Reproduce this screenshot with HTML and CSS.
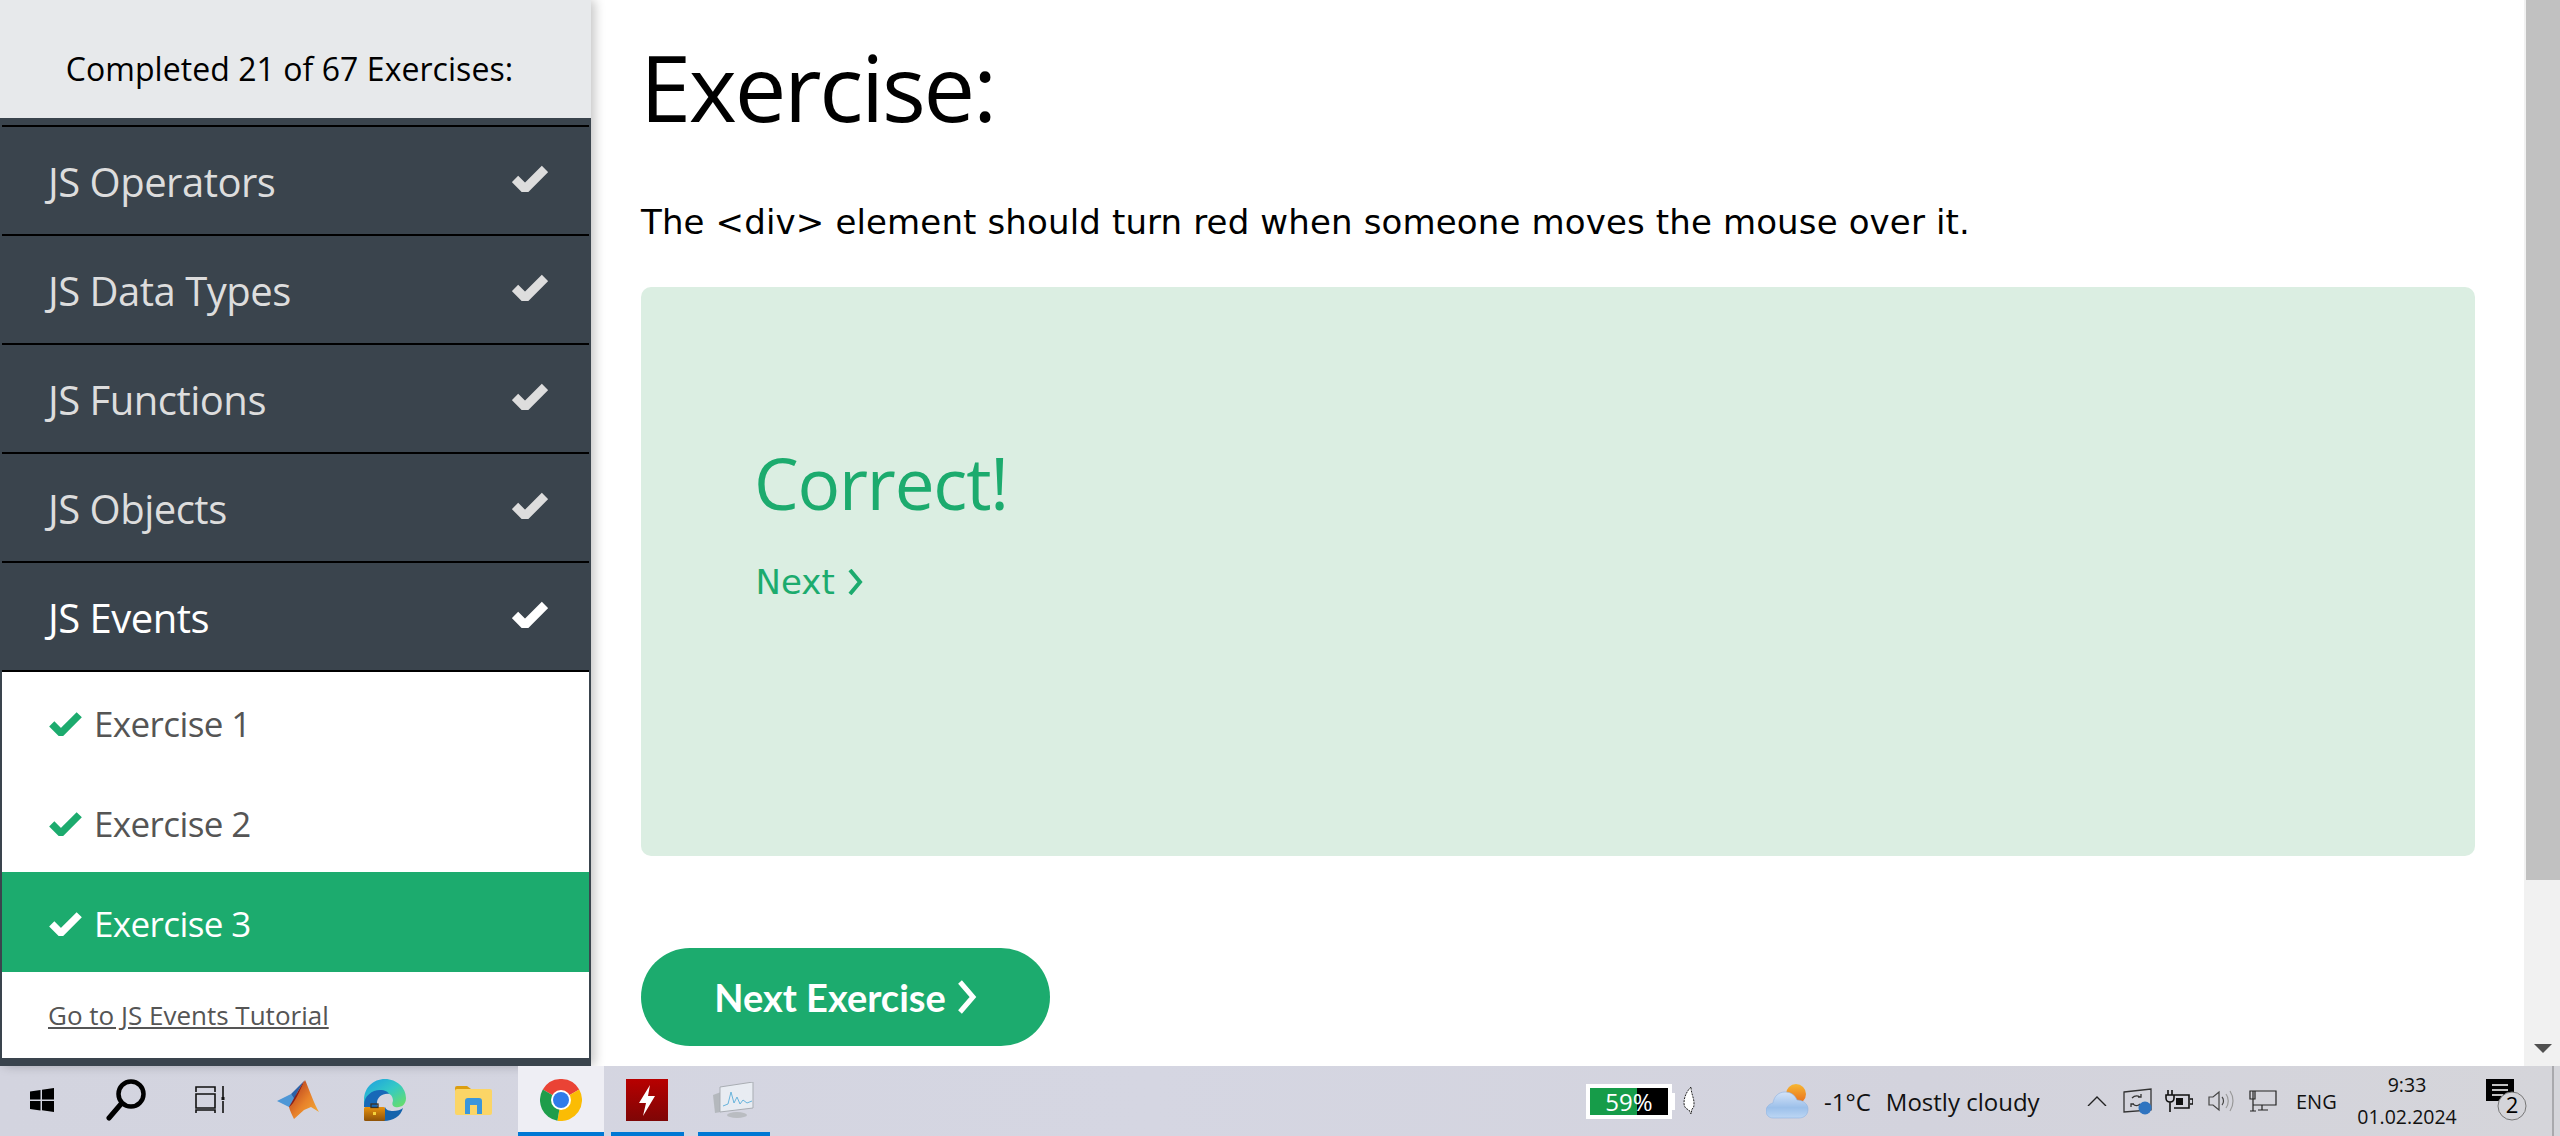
FILE: index.html
```html
<!DOCTYPE html>
<html lang="en">
  <head>
    <meta charset="UTF-8" />
    <title>JS Events Exercise</title>
    <link rel="stylesheet" href="styles.css">
  </head>
  <body>
    <div class="window">
      <aside class="sidebar">
        <div class="progress">Completed 21 of 67 Exercises:</div>
        <div class="menu">
          <div class="chapter"><span>JS Operators</span><svg class="tick" viewBox="0 0 36 28"><path d="M3 15l10 10L33 5"/></svg></div>
          <div class="chapter"><span>JS Data Types</span><svg class="tick" viewBox="0 0 36 28"><path d="M3 15l10 10L33 5"/></svg></div>
          <div class="chapter"><span>JS Functions</span><svg class="tick" viewBox="0 0 36 28"><path d="M3 15l10 10L33 5"/></svg></div>
          <div class="chapter"><span>JS Objects</span><svg class="tick" viewBox="0 0 36 28"><path d="M3 15l10 10L33 5"/></svg></div>
          <div class="chapter open"><span>JS Events</span><svg class="tick" viewBox="0 0 36 28"><path d="M3 15l10 10L33 5"/></svg></div>
          <div class="exercises">
            <div class="exercise"><svg class="mini-tick" viewBox="0 0 36 28"><path d="M3 15l10 10L33 5"/></svg>Exercise 1</div>
            <div class="exercise"><svg class="mini-tick" viewBox="0 0 36 28"><path d="M3 15l10 10L33 5"/></svg>Exercise 2</div>
            <div class="exercise current"><svg class="mini-tick" viewBox="0 0 36 28"><path d="M3 15l10 10L33 5"/></svg>Exercise 3</div>
            <div class="tutorial"><a href="#">Go to JS Events Tutorial</a></div>
          </div>
        </div>
      </aside>

      <main class="content">
        <h1>Exercise:</h1>
        <p class="question">The &lt;div&gt; element should turn red when someone moves the mouse over it.</p>
        <div class="result">
          <h2>Correct!</h2>
          <a class="next-link" href="#">Next<svg viewBox="0 0 16 26"><path d="M3 1l10 12L3 25"/></svg></a>
        </div>
        <a class="next-btn" href="#">Next Exercise<svg viewBox="0 0 20 34"><path d="M3 2l13 15L3 32"/></svg></a>
      </main>

      <div class="scrollbar">
        <div class="thumb"></div>
        <div class="arrow"></div>
      </div>
    </div>

    <footer class="taskbar">
      <div class="apps">
        <div class="slot small">
          <svg width="24" height="24" viewBox="0 0 24 24"><path d="M0 3.5l10.5-1.6v9.6H0zM12 1.7L24 0v11.5H12zM0 13h10.5v9.4L0 21zM12 13h12v11l-12-1.7z"/></svg>
        </div>
        <div class="slot small">
          <svg width="42" height="42" viewBox="0 0 42 42" fill="none" stroke="#000"><circle cx="26" cy="15" r="12.5" stroke-width="4.5"/><path d="M16 25L4 39" stroke-width="5" stroke-linecap="round"/></svg>
        </div>
        <div class="slot small">
          <svg width="30" height="28" viewBox="0 0 30 28" fill="none" stroke="#111" stroke-width="1.6"><path d="M1 6V1h19v5M1 8h19v14H1zM1 27v-3h19v3M28 0v11M28 15v12"/><rect x="26.5" y="11" width="3" height="3" fill="#111" stroke="none"/></svg>
        </div>
        <div class="slot shift">
          <svg width="42" height="40" viewBox="0 0 42 40">
            <defs><linearGradient id="peak" x1="0" y1="0" x2="1" y2="1"><stop offset="0" stop-color="#a82a1c"/><stop offset=".55" stop-color="#e8822a"/><stop offset="1" stop-color="#f2b23a"/></linearGradient></defs>
            <path fill="#4e97d6" d="M0 21l14-7 5 7-7 6z"/>
            <path fill="#2c62a8" d="M14 14L27 1l-7 12-2 7z"/>
            <path fill="#8a1f17" d="M12 27L24 6l3-5-5 26z"/>
            <path fill="url(#peak)" d="M28 0c3 6 9 24 14 32l-8-5-7 3-10 9c-2-4-4-8-5-12 6-3 12-20 16-27z"/>
          </svg>
        </div>
        <div class="slot">
          <svg width="42" height="42" viewBox="0 0 42 42">
            <defs>
              <linearGradient id="edgeA" x1="0" y1="0" x2="1" y2="1"><stop offset="0" stop-color="#1b9de2"/><stop offset=".5" stop-color="#33c9c6"/><stop offset="1" stop-color="#6fe05f"/></linearGradient>
              <linearGradient id="bag" x1="0" y1="0" x2="0" y2="1"><stop offset="0" stop-color="#e8920e"/><stop offset="1" stop-color="#8e5208"/></linearGradient>
            </defs>
            <path fill="url(#edgeA)" d="M0 21C0 9 9 0 21 0c12 0 21 9 21 19 0 7-5 10-11 9-3-1-3-4-2-6 0-6-4-8-8-8C11 14 4 18 0 26z"/>
            <path fill="#1769b8" d="M0 26c0-9 8-15 16-15 5 0 8 2 9 4-6-1-12 3-12 9 0 2 0 3 1 4H0z"/>
            <path fill="#1463ac" d="M20 42c-2 0-4-.5-5-1l6-13c1 3 4 4 8 4 4 0 8-1 10-3-2 8-10 13-19 13z"/>
            <rect y="28" width="21" height="14" rx="1.5" fill="url(#bag)"/>
            <rect x="7" y="25" width="7" height="3.5" fill="none" stroke="#3a3226" stroke-width="1.3"/>
            <rect x="9" y="33" width="3" height="3" fill="#f4d23c"/>
          </svg>
        </div>
        <div class="slot shift">
          <svg width="38" height="30" viewBox="0 0 38 30">
            <path fill="#dc9e10" d="M0 3a2 2 0 012-2h10l4 3v4H0z"/>
            <rect y="4" width="37" height="26" rx="2" fill="#fbd566"/>
            <path fill="#3a96dc" d="M10 29V16a3 3 0 013-3h11a3 3 0 013 3v13h-5v-9h-7v9z"/>
          </svg>
        </div>
        <div class="slot active running">
          <svg width="42" height="42" viewBox="0 0 42 42">
            <path fill="#ea4335" d="M21 21L2.8 10.5A21 21 0 0139.2 10.5z"/>
            <path fill="#fbbc04" d="M21 21L39.2 10.5A21 21 0 0117.4 41.7z"/>
            <path fill="#1e9d4b" d="M21 21L17.4 41.7A21 21 0 012.8 10.5z"/>
            <circle cx="21" cy="21" r="10" fill="#fff"/>
            <circle cx="21" cy="21" r="8" fill="#2f7bea"/>
          </svg>
        </div>
        <div class="slot running">
          <svg width="42" height="42" viewBox="0 0 42 42">
            <defs><linearGradient id="red" x1="0" y1="0" x2="0" y2="1"><stop offset="0" stop-color="#b80000"/><stop offset="1" stop-color="#7e0606"/></linearGradient></defs>
            <rect width="42" height="42" fill="url(#red)"/>
            <path fill="#fff" d="M24 6l-11 18h7l-3 13 12-20h-7z"/>
          </svg>
        </div>
        <div class="slot running">
          <svg width="42" height="36" viewBox="0 0 42 36">
            <path fill="#b4b8bd" d="M0 13l8-3v20l-6 1z"/>
            <path fill="#e8ecf2" stroke="#a9adb3" d="M7 5l33-5v26L7 30z"/>
            <path fill="none" stroke="#69b4dc" d="M10 24l5-2 3-12 3 11 3-6 3 7 3-4 4 3 5-2"/>
            <ellipse cx="24" cy="33" rx="10" ry="3" fill="#b9bcc1"/>
          </svg>
        </div>
      </div>

      <div class="tray">
        <div class="battery"><span>59%</span></div>
        <svg class="leaf" width="12" height="30" viewBox="0 0 12 30"><path fill="#fff" stroke="#222" stroke-dasharray="2 1" d="M8 1C3 6 1 12 1 17c0 4 2 6 5 7l2 4 1-5c2-1 2-3 2-6 0-5-3-10-3-16z"/></svg>
        <svg class="weather" width="43" height="35" viewBox="0 0 43 35">
          <defs>
            <linearGradient id="sun" x1="0" y1="0" x2="0" y2="1"><stop offset="0" stop-color="#f7b731"/><stop offset="1" stop-color="#e8691b"/></linearGradient>
            <linearGradient id="cloud" x1="0" y1="0" x2="0" y2="1"><stop offset="0" stop-color="#d4e3f8"/><stop offset=".6" stop-color="#9cc0ea"/><stop offset="1" stop-color="#bcd6f4"/></linearGradient>
          </defs>
          <circle cx="30" cy="10" r="10" fill="url(#sun)"/>
          <path fill="url(#cloud)" stroke="#8fb4e2" stroke-width=".6" d="M7 34c-4 0-7-3-7-7s3-7 7-8c1-7 6-11 12-11 6 0 10 3 12 8 6 0 11 4 11 9 0 6-4 9-9 9z"/>
        </svg>
        <div class="forecast"><span>-1°C</span><span>Mostly cloudy</span></div>
        <svg class="caret" width="20" height="10" viewBox="0 0 20 10" fill="none" stroke="#222" stroke-width="1.4"><path d="M1 10l9-9 9 9"/></svg>
        <svg class="sync" width="30" height="27" viewBox="0 0 30 27" fill="none" stroke="#333" stroke-width="1.3">
          <path d="M1 4l27-3v21L1 24z"/>
          <path d="M9 10c2-2 5-3 8-1M17 16c-2 2-5 2-7 0M15 9h3V6M11 16H8v3"/>
          <circle cx="22" cy="20" r="6.5" fill="#2f74c0" stroke="none"/>
        </svg>
        <svg class="plug" width="28" height="22" viewBox="0 0 28 22" fill="none" stroke="#111" stroke-width="1.6">
          <path d="M3 0v5M7 0v5M1 5h8v3c0 3-2 4-4 4s-4-1-4-4zM5 12v10M9 5h15v13H9M25 9h3v5h-3"/>
          <rect x="11" y="8" width="7" height="7" fill="#111" stroke="none"/>
        </svg>
        <svg class="speaker" width="26" height="22" viewBox="0 0 26 22" fill="none" stroke="#444" stroke-width="1.2">
          <path d="M1 7h4l6-5v18l-6-5H1z"/>
          <path d="M14 7c2 2 2 6 0 8"/>
          <path stroke="#999" d="M18 4c3 4 3 10 0 14M22 1c4 6 4 14 0 20"/>
        </svg>
        <svg class="screen" width="28" height="22" viewBox="0 0 28 22" fill="none" stroke="#222" stroke-width="1.2">
          <path d="M1 1h26v14H4M4 1v20M1 21h6M13 15v5M9 20h10M1 1h5v8H1z"/>
        </svg>
        <div class="lang">ENG</div>
        <div class="clock"><span>9:33</span><span>01.02.2024</span></div>
        <div class="notify">
          <svg width="42" height="44" viewBox="0 0 42 44">
            <path d="M0 0h28v22h-6l-3 4-3-4H0z"/>
            <path stroke="#fff" stroke-width="1.3" d="M6 6h16M6 11h16M6 16h11"/>
            <circle cx="26" cy="27" r="14" fill="#d4d4d9" stroke="#777" stroke-width="1"/>
            <text x="26" y="34" text-anchor="middle" class="count">2</text>
          </svg>
        </div>
        <div class="desktop"></div>
      </div>
    </footer>
  </body>
</html>
```

FILE: styles.css
```css
* {
  box-sizing: border-box;
}

body {
  font-family: "Open Sans", sans-serif;
  background-color: #fff;
  margin: 0;
  height: 1136px;
  overflow: hidden;
}

a {
  color: inherit;
}

.window {
  display: flex;
  height: 1066px;
}

/* sidebar */
.sidebar {
  width: 591px;
  flex: none;
  display: flex;
  flex-direction: column;
  box-shadow: 4px 0 10px rgba(0, 0, 0, 0.22);
  position: relative;
}

.progress {
  height: 118px;
  display: flex;
  align-items: center;
  justify-content: center;
  padding: 18px 12px 0 0;
  background-color: #e7e9eb;
  font-size: 32px;
  letter-spacing: 0.05px;
  color: #000;
}

.menu {
  flex: 1;
  background-color: #3a444d;
  padding: 7px 2px 8px;
  display: flex;
  flex-direction: column;
}

.chapter {
  height: 109px;
  flex: none;
  border-top: 2px solid #000;
  padding: 2px 41px 0 46px;
  display: flex;
  align-items: center;
  justify-content: space-between;
  color: #ddd;
  font-size: 40px;
  letter-spacing: -0.5px;
}

.chapter.open {
  color: #fff;
}

.tick {
  width: 36px;
  height: 28px;
  margin-top: -8px;
  fill: none;
  stroke: currentColor;
  stroke-width: 9;
}

.exercises {
  flex: 1;
  background-color: #fff;
  border-top: 2px solid #000;
  display: flex;
  flex-direction: column;
}

.exercise {
  height: 100px;
  flex: none;
  display: flex;
  align-items: center;
  padding: 2px 0 0 47px;
  font-size: 35px;
  letter-spacing: -0.6px;
  color: #555;
}

.exercise.current {
  background-color: #1cab6e;
  color: #fff;
}

.mini-tick {
  width: 33px;
  height: 26px;
  margin-right: 12px;
  fill: none;
  stroke: #1cab6e;
  stroke-width: 8;
}

.current .mini-tick {
  stroke: #fff;
}

.tutorial {
  flex: 1;
  display: flex;
  align-items: center;
  padding-left: 46px;
  font-size: 26px;
  color: #555;
}

/* exercise result */
.content {
  flex: 1;
  padding: 0 49px 0 50px;
}

h1 {
  margin: 24px 0 0 -1px;
  font-size: 92px;
  font-weight: 400;
  line-height: 126px;
  letter-spacing: -2.3px;
  color: #000;
}

.question {
  margin: 49px 0 0 0;
  font-family: "DejaVu Sans", sans-serif;
  font-size: 34px;
  line-height: 46px;
  letter-spacing: 0.14px;
  color: #000;
}

.result {
  margin-top: 42px;
  height: 569px;
  padding: 146px 0 0 113px;
  background-color: #dbeee2;
  border-radius: 10px;
  color: #1cab6e;
}

.result h2 {
  margin: 0;
  font-size: 71px;
  font-weight: 400;
  line-height: 100px;
  letter-spacing: -1.2px;
}

.next-link {
  display: inline-flex;
  align-items: center;
  gap: 12px;
  margin: 26px 0 0 1.5px;
  font-family: "DejaVu Sans", sans-serif;
  font-size: 34px;
  line-height: 46px;
  text-decoration: none;
}

.next-link svg {
  width: 16px;
  height: 26px;
  fill: none;
  stroke: currentColor;
  stroke-width: 4;
}

.next-btn {
  margin-top: 92px;
  width: 409px;
  height: 98px;
  border-radius: 49px;
  display: flex;
  align-items: center;
  justify-content: center;
  gap: 11px;
  background-color: #1cab6e;
  color: #fff;
  font-family: Lato, sans-serif;
  font-weight: 700;
  font-size: 38px;
  text-decoration: none;
}

.next-btn svg {
  width: 20px;
  height: 34px;
  fill: none;
  stroke: #fff;
  stroke-width: 5;
}

/* browser scrollbar */
.scrollbar {
  width: 36px;
  flex: none;
  background-color: #f1f1f1;
  padding-left: 2px;
  display: flex;
  flex-direction: column;
  align-items: center;
}

.thumb {
  width: 100%;
  height: 880px;
  background-color: #c1c1c1;
}

.arrow {
  margin-top: 164px;
  border-left: 9px solid transparent;
  border-right: 9px solid transparent;
  border-top: 9px solid #505050;
}

/* windows taskbar */
.taskbar {
  height: 70px;
  display: flex;
  background: linear-gradient(to right, #d3d4df, #d5d6e2 45%, #d3d3dd 75%, #d5d5da);
}

.apps {
  width: 777px;
  flex: none;
  display: flex;
}

.slot {
  width: 86.5px;
  flex: none;
  display: flex;
  align-items: center;
  justify-content: center;
  padding-bottom: 2px;
  position: relative;
}

.slot.small {
  width: 84px;
}

.slot.shift {
  margin-left: 3px;
}

.slot.running::after {
  content: "";
  position: absolute;
  left: 7px;
  right: 7px;
  bottom: 0;
  height: 4px;
  background-color: #0078d4;
}

.slot.active {
  background-color: #eeeef4;
}

.slot.active::after {
  left: 0;
  right: 0;
}

.tray {
  flex: 1;
  display: flex;
  align-items: center;
  padding-left: 809px;
  color: #111;
}

.battery {
  width: 86px;
  height: 35px;
  flex: none;
  border: 4px solid #fff;
  background: linear-gradient(to right, #169c49 60%, #000 60%);
  color: #fff;
  font-size: 24px;
  line-height: 27px;
  text-align: center;
  position: relative;
}

.battery::after {
  content: "";
  position: absolute;
  right: -7px;
  top: 5px;
  width: 3px;
  height: 17px;
  background-color: #fff;
}

.leaf {
  margin-left: 11px;
  flex: none;
}

.weather {
  margin-left: 71px;
  flex: none;
}

.forecast {
  width: 216px;
  margin-left: 15px;
  flex: none;
  display: flex;
  gap: 15px;
  font-size: 24px;
  white-space: nowrap;
}

.caret {
  margin-left: 47px;
  flex: none;
}

.sync {
  margin-left: 16px;
  flex: none;
}

.plug {
  margin-left: 12px;
  flex: none;
}

.speaker {
  margin-left: 15px;
  flex: none;
}

.screen {
  margin-left: 15px;
  flex: none;
}

.lang {
  width: 39px;
  margin-left: 19px;
  flex: none;
  font-size: 20px;
}

.clock {
  width: 98px;
  margin-left: 23px;
  flex: none;
  display: flex;
  flex-direction: column;
  align-items: center;
  gap: 4px;
  font-size: 19.5px;
  line-height: 28px;
  white-space: nowrap;
}

.notify {
  width: 42px;
  margin-left: 30px;
  flex: none;
  display: flex;
}

.count {
  font-family: "Open Sans", sans-serif;
  font-size: 22px;
  fill: #000;
}

.desktop {
  margin-left: auto;
  width: 8px;
  height: 100%;
  border-left: 2px solid #a9a9ad;
}
```
